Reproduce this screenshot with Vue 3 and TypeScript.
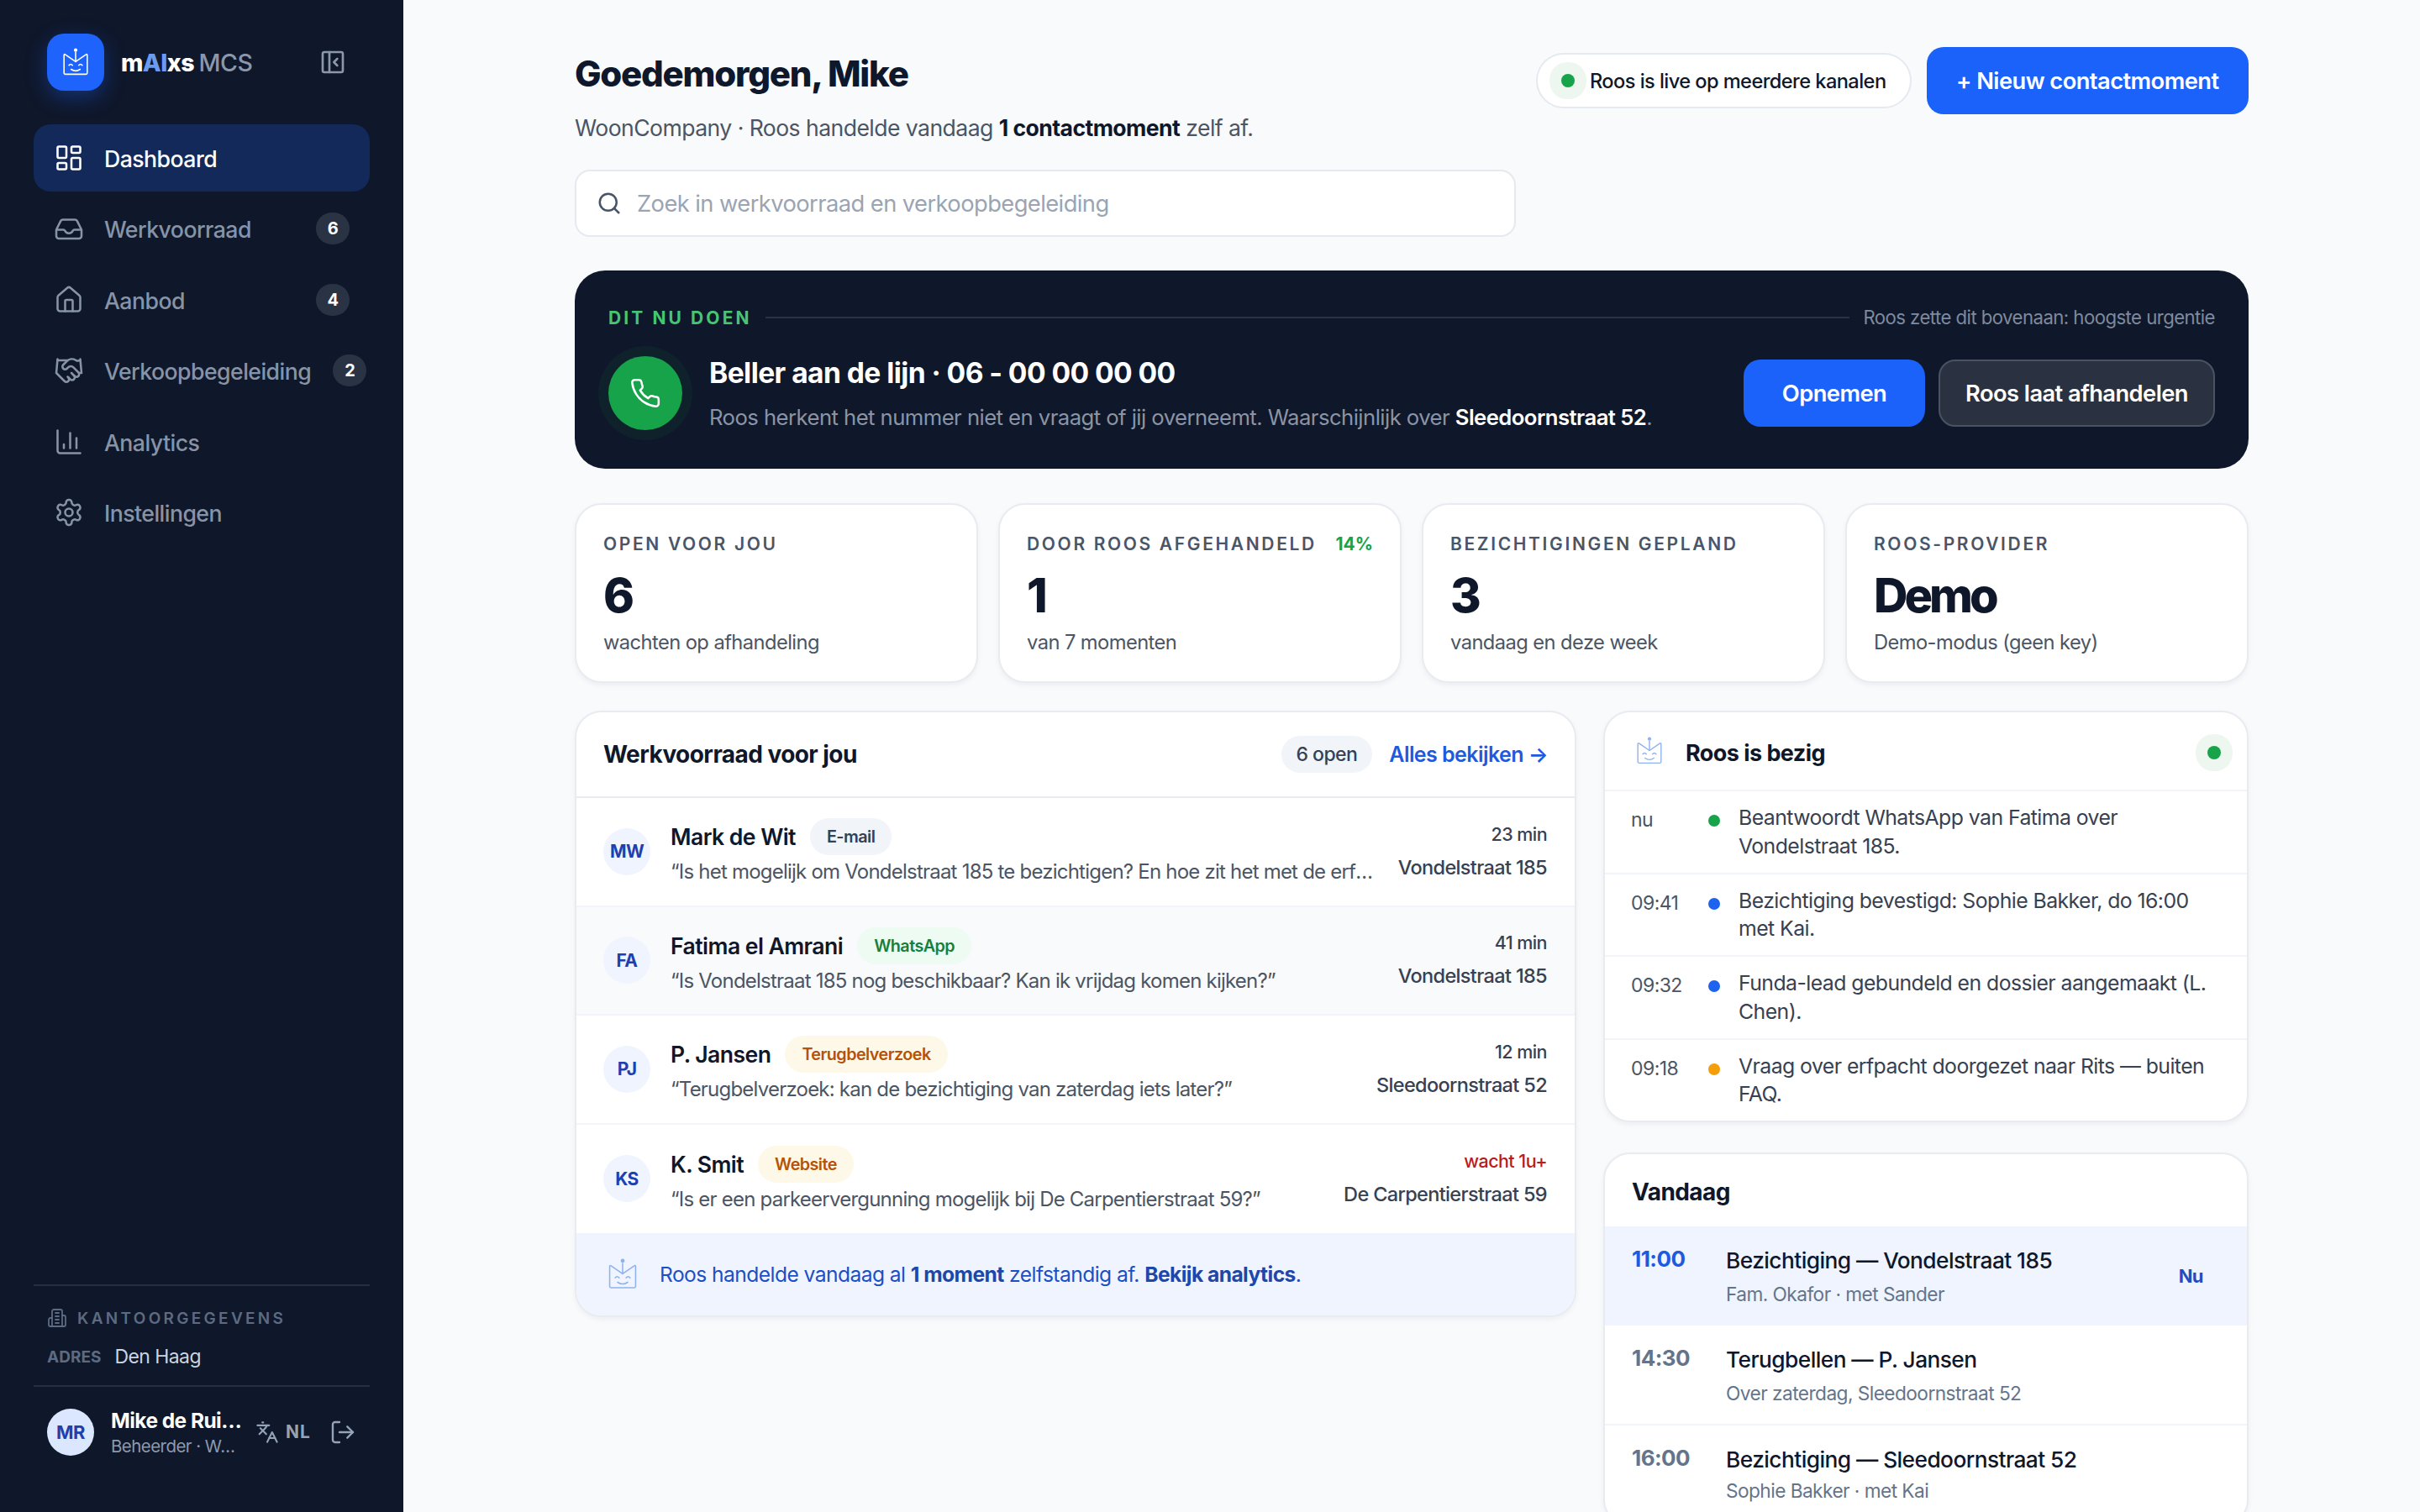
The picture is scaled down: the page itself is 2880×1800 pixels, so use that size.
<script setup lang="ts">
const nav = [
  { label: "Dashboard", icon: "dash", active: true },
  { label: "Werkvoorraad", icon: "inbox", badge: 6 },
  { label: "Aanbod", icon: "home", badge: 4 },
  { label: "Verkoopbegeleiding", icon: "hands", badge: 2 },
  { label: "Analytics", icon: "chart" },
  { label: "Instellingen", icon: "gear" },
];
const stats = [
  { label: "OPEN VOOR JOU", value: "6", sub: "wachten op afhandeling" },
  { label: "DOOR ROOS AFGEHANDELD", pct: "14%", value: "1", sub: "van 7 momenten" },
  { label: "BEZICHTIGINGEN GEPLAND", value: "3", sub: "vandaag en deze week" },
  { label: "ROOS-PROVIDER", value: "Demo", sub: "Demo-modus (geen key)" },
];
const work = [
  { ini: "MW", name: "Mark de Wit", tag: "E-mail", kind: "grey", quote: "“Is het mogelijk om Vondelstraat 185 te bezichtigen? En hoe zit het met de erfpacht en de servicekosten?”", time: "23 min", addr: "Vondelstraat 185" },
  { ini: "FA", name: "Fatima el Amrani", tag: "WhatsApp", kind: "green", quote: "“Is Vondelstraat 185 nog beschikbaar? Kan ik vrijdag komen kijken?”", time: "41 min", addr: "Vondelstraat 185", alt: true },
  { ini: "PJ", name: "P. Jansen", tag: "Terugbelverzoek", kind: "amber", quote: "“Terugbelverzoek: kan de bezichtiging van zaterdag iets later?”", time: "12 min", addr: "Sleedoornstraat 52" },
  { ini: "KS", name: "K. Smit", tag: "Website", kind: "amber", quote: "“Is er een parkeervergunning mogelijk bij De Carpentierstraat 59?”", time: "wacht 1u+", late: true, addr: "De Carpentierstraat 59" },
];
const activity = [
  { time: "nu", color: "#16a34a", text: "Beantwoordt WhatsApp van Fatima over Vondelstraat 185." },
  { time: "09:41", color: "#1d63f0", text: "Bezichtiging bevestigd: Sophie Bakker, do 16:00 met Kai." },
  { time: "09:32", color: "#1d63f0", text: "Funda-lead gebundeld en dossier aangemaakt (L. Chen)." },
  { time: "09:18", color: "#f59e0b", text: "Vraag over erfpacht doorgezet naar Rits — buiten FAQ." },
];
const today = [
  { time: "11:00", title: "Bezichtiging — Vondelstraat 185", sub: "Fam. Okafor · met Sander", now: true },
  { time: "14:30", title: "Terugbellen — P. Jansen", sub: "Over zaterdag, Sleedoornstraat 52" },
  { time: "16:00", title: "Bezichtiging — Sleedoornstraat 52", sub: "Sophie Bakker · met Kai" },
];
// Roos mascot, shared by the logo and the two small marks
const roosFrame = "M3 8v20a1.5 1.5 0 0 0 1.5 1.5h23a1.5 1.5 0 0 0 1.5-1.5V8a.8.8 0 0 0-1.3-.6L16 15.5 4.3 7.400a.8.8 0 0 0-1.3.6z";
const roosFace = "M16 5v10.500M8.500 19.500q2-2.400 4 0M19.500 19.500q2-2.400 4 0M11 24q5 3.500 10 0";
</script>

<template>
  <div class="app">
    <aside class="side">
      <div class="brand">
        <div class="logo">
          <svg viewBox="0 0 32 32" width="34" height="34" fill="none" stroke="#fff" stroke-width="1.5" stroke-linecap="round" stroke-linejoin="round">
            <path :d="roosFrame" /><path :d="roosFace" />
            <circle cx="16" cy="2.500" r="2" fill="#fff" stroke="none" />
          </svg>
        </div>
        <div class="brand-name">m<span class="ai">AI</span>xs <span class="mcs">MCS</span></div>
        <svg class="collapse" viewBox="0 0 24 24" width="32" height="32" fill="none" stroke="#8b97aa" stroke-width="2" stroke-linecap="round" stroke-linejoin="round">
          <rect x="3" y="3" width="18" height="18" rx="1.5" /><path d="M9 3v18" /><path d="m16 15-3-3 3-3" />
        </svg>
      </div>

      <nav class="nav">
        <div v-for="item in nav" :key="item.label" class="nav-item" :class="{ active: item.active }">
          <svg viewBox="0 0 24 24" width="36" height="36" fill="none" stroke="currentColor" stroke-width="1.7" stroke-linecap="round" stroke-linejoin="round">
            <template v-if="item.icon === 'dash'">
              <rect x="3" y="3" width="7" height="9" rx="1" /><rect x="14" y="3" width="7" height="5" rx="1" /><rect x="14" y="12" width="7" height="9" rx="1" /><rect x="3" y="16" width="7" height="5" rx="1" />
            </template>
            <template v-else-if="item.icon === 'inbox'">
              <path d="M5.45 6.11 2 13v5a2 2 0 0 0 2 2h16a2 2 0 0 0 2-2v-5l-3.45-6.89A2 2 0 0 0 16.76 5H7.24a2 2 0 0 0-1.79 1.11z" />
              <path d="M2.5 13h5.2c.5 0 .9.3 1.1.7a3.5 3.5 0 0 0 6.4 0c.2-.4.6-.7 1.1-.7h5.2" />
            </template>
            <template v-else-if="item.icon === 'home'">
              <path d="M15 21v-8a1 1 0 0 0-1-1h-4a1 1 0 0 0-1 1v8" />
              <path d="M3 10a2 2 0 0 1 .709-1.528l7-5.999a2 2 0 0 1 2.582 0l7 5.999A2 2 0 0 1 21 10v9a2 2 0 0 1-2 2H5a2 2 0 0 1-2-2z" />
            </template>
            <template v-else-if="item.icon === 'hands'">
              <path d="m11 17 2 2a1 1 0 1 0 3-3" />
              <path d="m14 14 2.5 2.5a1 1 0 1 0 3-3l-3.88-3.88a3 3 0 0 0-4.24 0l-.88.88a1 1 0 1 1-3-3l2.81-2.81a5.79 5.79 0 0 1 7.06-.87l.47.28a2 2 0 0 0 1.42.25L21 4" />
              <path d="m21 3 1 11h-2" /><path d="M3 3 2 14l6.5 6.5a1 1 0 1 0 3-3" /><path d="M3 4h8" />
            </template>
            <template v-else-if="item.icon === 'chart'">
              <path d="M3 3v16a2 2 0 0 0 2 2h16" /><path d="M18 17V9" /><path d="M13 17V5" /><path d="M8 17v-3" />
            </template>
            <template v-else>
              <path d="M12.22 2h-.44a2 2 0 0 0-2 2v.18a2 2 0 0 1-1 1.73l-.43.25a2 2 0 0 1-2 0l-.15-.08a2 2 0 0 0-2.73.73l-.22.38a2 2 0 0 0 .73 2.73l.15.1a2 2 0 0 1 1 1.72v.51a2 2 0 0 1-1 1.74l-.15.09a2 2 0 0 0-.73 2.73l.22.38a2 2 0 0 0 2.73.73l.15-.08a2 2 0 0 1 2 0l.43.25a2 2 0 0 1 1 1.73V20a2 2 0 0 0 2 2h.44a2 2 0 0 0 2-2v-.18a2 2 0 0 1 1-1.73l.43-.25a2 2 0 0 1 2 0l.15.08a2 2 0 0 0 2.73-.73l.22-.39a2 2 0 0 0-.73-2.73l-.15-.08a2 2 0 0 1-1-1.74v-.5a2 2 0 0 1 1-1.74l.15-.09a2 2 0 0 0 .73-2.73l-.22-.38a2 2 0 0 0-2.73-.73l-.15.08a2 2 0 0 1-2 0l-.43-.25a2 2 0 0 1-1-1.73V4a2 2 0 0 0-2-2z" />
              <circle cx="12" cy="12" r="3" />
            </template>
          </svg>
          <span class="nav-label">{{ item.label }}</span>
          <span v-if="item.badge" class="nav-badge">{{ item.badge }}</span>
        </div>
      </nav>

      <div class="office">
        <div class="office-head">
          <svg viewBox="0 0 24 24" width="24" height="24" fill="none" stroke="#5c6b82" stroke-width="1.8" stroke-linecap="round" stroke-linejoin="round">
            <path d="M6 22V4a2 2 0 0 1 2-2h8a2 2 0 0 1 2 2v18Z" /><path d="M6 12H4a2 2 0 0 0-2 2v6a2 2 0 0 0 2 2h2" /><path d="M18 9h2a2 2 0 0 1 2 2v9a2 2 0 0 1-2 2h-2" /><path d="M10 6h4M10 10h4M10 14h4M10 18h4" />
          </svg>
          <span>KANTOORGEGEVENS</span>
        </div>
        <div class="office-line"><span class="office-key">ADRES</span><span class="office-val">Den Haag</span></div>
      </div>

      <div class="user">
        <div class="user-av">MR</div>
        <div class="user-text">
          <div class="user-name">Mike de Ruiter</div>
          <div class="user-role">Beheerder · WoonCompany</div>
        </div>
        <svg viewBox="0 0 24 24" width="28" height="28" fill="none" stroke="#94a3b8" stroke-width="1.8" stroke-linecap="round" stroke-linejoin="round">
          <path d="m5 8 6 6" /><path d="m4 14 6-6 2-3" /><path d="M2 5h12" /><path d="M7 2h1" /><path d="m22 22-5-10-5 10" /><path d="M14 18h6" />
        </svg>
        <span class="lang">NL</span>
        <svg class="logout" viewBox="0 0 24 24" width="32" height="32" fill="none" stroke="#94a3b8" stroke-width="1.8" stroke-linecap="round" stroke-linejoin="round">
          <path d="m16 17 5-5-5-5" /><path d="M21 12H9" /><path d="M9 21H5a2 2 0 0 1-2-2V5a2 2 0 0 1 2-2h4" />
        </svg>
      </div>
    </aside>

    <main class="main">
      <header class="head">
        <div>
          <h1>Goedemorgen, Mike</h1>
          <p class="lead">WoonCompany · Roos handelde vandaag <b>1 contactmoment</b> zelf af.</p>
        </div>
        <div class="head-actions">
          <div class="live"><i class="dot" /><span>Roos is live op meerdere kanalen</span></div>
          <button class="btn primary">+ Nieuw contactmoment</button>
        </div>
      </header>

      <div class="search">
        <svg viewBox="0 0 24 24" width="30" height="30" fill="none" stroke="#475569" stroke-width="2" stroke-linecap="round" stroke-linejoin="round">
          <circle cx="11" cy="11" r="8" /><path d="m21 21-4.3-4.3" />
        </svg>
        <span>Zoek in werkvoorraad en verkoopbegeleiding</span>
      </div>

      <section class="task">
        <div class="task-top">
          <span class="task-kicker">DIT NU DOEN</span>
          <span class="task-rule" />
          <span class="task-why">Roos zette dit bovenaan: hoogste urgentie</span>
        </div>
        <div class="task-body">
          <div class="task-phone">
            <svg viewBox="0 0 24 24" width="38" height="38" fill="none" stroke="#fff" stroke-width="1.6" stroke-linecap="round" stroke-linejoin="round">
              <path d="M22 16.92v3a2 2 0 0 1-2.18 2 19.79 19.79 0 0 1-8.63-3.07 19.5 19.5 0 0 1-6-6 19.79 19.79 0 0 1-3.07-8.67A2 2 0 0 1 4.11 2h3a2 2 0 0 1 2 1.72 12.84 12.84 0 0 0 .7 2.81 2 2 0 0 1-.45 2.11L8.09 9.91a16 16 0 0 0 6 6l1.27-1.27a2 2 0 0 1 2.11-.45 12.84 12.84 0 0 0 2.81.7A2 2 0 0 1 22 16.92z" />
            </svg>
          </div>
          <div class="task-text">
            <div class="task-title">Beller aan de lijn · 06 - 00 00 00 00</div>
            <div class="task-sub">Roos herkent het nummer niet en vraagt of jij overneemt. Waarschijnlijk over <b>Sleedoornstraat 52</b>.</div>
          </div>
          <button class="btn primary open">Opnemen</button>
          <button class="btn ghost">Roos laat afhandelen</button>
        </div>
      </section>

      <section class="stats">
        <div v-for="s in stats" :key="s.label" class="card stat">
          <div class="stat-label"><span>{{ s.label }}</span><span v-if="s.pct" class="stat-pct">{{ s.pct }}</span></div>
          <div class="stat-value">{{ s.value }}</div>
          <div class="stat-sub">{{ s.sub }}</div>
        </div>
      </section>

      <section class="cols">
        <div class="card work">
          <div class="work-head">
            <h2>Werkvoorraad voor jou</h2>
            <span class="open-pill">6 open</span>
            <span class="all-link">Alles bekijken →</span>
          </div>
          <div v-for="w in work" :key="w.ini" class="work-row" :class="{ alt: w.alt }">
            <div class="av">{{ w.ini }}</div>
            <div class="work-main">
              <div class="work-name"><b>{{ w.name }}</b><span class="tag" :class="w.kind">{{ w.tag }}</span></div>
              <div class="work-quote">{{ w.quote }}</div>
            </div>
            <div class="work-meta">
              <div class="work-time" :class="{ late: w.late }">{{ w.time }}</div>
              <div class="work-addr">{{ w.addr }}</div>
            </div>
          </div>
          <div class="work-foot">
            <svg viewBox="0 0 32 32" width="38" height="38" fill="none" stroke="#8fb2ee" stroke-width="1.3" stroke-linecap="round" stroke-linejoin="round">
              <path :d="roosFrame" /><path :d="roosFace" />
              <circle cx="16" cy="2.500" r="2" fill="#8fb2ee" stroke="none" />
            </svg>
            <span>Roos handelde vandaag al <b>1 moment</b> zelfstandig af. <b>Bekijk analytics</b>.</span>
          </div>
        </div>

        <div class="right">
          <div class="card busy">
            <div class="busy-head">
              <svg viewBox="0 0 32 32" width="34" height="34" fill="none" stroke="#8fb2ee" stroke-width="1.3" stroke-linecap="round" stroke-linejoin="round">
                <path :d="roosFrame" /><path :d="roosFace" />
                <circle cx="16" cy="2.500" r="2" fill="#8fb2ee" stroke="none" />
              </svg>
              <h2>Roos is bezig</h2>
              <i class="dot" />
            </div>
            <div v-for="a in activity" :key="a.time" class="busy-row">
              <span class="busy-time">{{ a.time }}</span>
              <i class="busy-dot" :style="{ background: a.color }" />
              <span class="busy-text">{{ a.text }}</span>
            </div>
          </div>

          <div class="card agenda">
            <h2>Vandaag</h2>
            <div v-for="t in today" :key="t.time" class="agenda-row" :class="{ current: t.now }">
              <span class="agenda-time">{{ t.time }}</span>
              <div class="agenda-main">
                <div class="agenda-title">{{ t.title }}</div>
                <div class="agenda-sub">{{ t.sub }}</div>
              </div>
              <span v-if="t.now" class="agenda-now">Nu</span>
            </div>
          </div>
        </div>
      </section>
    </main>
  </div>
</template>

<style>
html, body { margin: 0; overflow: hidden; }
</style>

<style scoped>
.app {
  display: flex;
  height: 1800px;
  overflow: hidden;
  background: #f8fafc;
  font-family: Inter, "Liberation Sans", sans-serif;
  letter-spacing: -0.035em;
  color: #0f172a;
}
h1, h2, p { margin: 0; }
button { font-family: inherit; border: 0; letter-spacing: inherit; }

.side {
  width: 480px;
  flex: none;
  box-sizing: border-box;
  display: flex;
  flex-direction: column;
  padding: 40px 40px 0;
  background: #0f172a;
}
.brand { display: flex; align-items: center; height: 68px; padding-left: 16px; }
.logo {
  width: 68px;
  height: 68px;
  flex: none;
  display: flex;
  align-items: center;
  justify-content: center;
  border-radius: 20px;
  background: #1e63fb;
  box-shadow: 0 8px 24px rgba(30, 99, 251, 0.35);
}
.brand-name { margin-left: 20px; font-size: 28.5px; font-weight: 800; color: #fff; white-space: nowrap; letter-spacing: -0.02em; }
.ai { color: #6a9bf0; }
.mcs { color: #8b97aa; font-weight: 500; }
.collapse { margin-left: auto; margin-right: 28px; }

.nav { display: flex; flex-direction: column; gap: 4.4px; margin-top: 40px; }
.nav-item {
  display: flex;
  align-items: center;
  gap: 24px;
  height: 80px;
  padding: 0 24px;
  border-radius: 20px;
  color: #8793a7;
  font-size: 26.7px;
  font-weight: 500;
  white-space: nowrap;
}
.nav-item svg { flex: none; }
.nav-item.active { background: #12295a; color: #fff; }
.nav-label { flex: none; padding-top: 2px; margin-right: 2px; }
.nav-badge {
  margin-left: auto;
  width: 40px;
  height: 38px;
  flex: none;
  display: flex;
  align-items: center;
  justify-content: center;
  border-radius: 20px;
  background: #2a3344;
  color: #fff;
  font-size: 20px;
  font-weight: 700;
}

.office { margin-top: auto; height: 120px; box-sizing: border-box; padding: 26px 16px 0; border-top: 2px solid #252f42; }
.office-head { display: flex; align-items: center; gap: 12px; height: 24px; font-size: 19px; font-weight: 600; color: #5c6b82; letter-spacing: 3.3px; }
.office-line { display: flex; align-items: center; gap: 16px; height: 24px; margin-top: 22px; }
.office-key { font-size: 19px; font-weight: 700; color: #5c6b82; letter-spacing: 0; }
.office-val { font-size: 23px; color: #cbd5e1; }

.user {
  display: flex;
  align-items: center;
  height: 107px;
  margin-bottom: 42px;
  padding: 0 16px;
  border-top: 2px solid #252f42;
}
.user-av {
  width: 56px;
  height: 56px;
  flex: none;
  display: flex;
  align-items: center;
  justify-content: center;
  border-radius: 50%;
  background: #dbe7fe;
  color: #1e40af;
  font-size: 22px;
  font-weight: 700;
}
.user-text { width: 156px; flex: none; margin: 0 16px 0 20px; }
.user-name, .user-role { white-space: nowrap; overflow: hidden; text-overflow: ellipsis; }
.user-name { font-size: 24.5px; font-weight: 700; color: #fff; line-height: 34px; }
.user-role { font-size: 20.5px; color: #8d99ad; line-height: 28px; }
.lang { margin-left: 8px; font-size: 21px; font-weight: 700; color: #94a3b8; letter-spacing: 1px; }
.logout { margin-left: auto; }

.main { flex: 1; min-width: 0; box-sizing: border-box; padding: 56px 204px 0; }
.head { display: flex; justify-content: space-between; align-items: flex-start; }
h1 { font-size: 42px; line-height: 64px; font-weight: 800; letter-spacing: -1.25px; }
.lead { margin-top: 14px; font-size: 26.6px; line-height: 36px; color: #4b5563; }
.lead b { color: #0f172a; font-weight: 700; }
.head-actions { display: flex; align-items: center; gap: 18px; }
.live {
  display: flex;
  align-items: center;
  gap: 4px;
  height: 66px;
  box-sizing: border-box;
  padding: 0 28px 0 14px;
  background: #fff;
  border: 2px solid #e5e9f0;
  border-radius: 33px;
  font-size: 23.6px;
  font-weight: 500;
  white-space: nowrap;
}
.dot {
  display: block;
  width: 16px;
  height: 16px;
  margin: 14px;
  flex: none;
  border-radius: 50%;
  background: #16a34a;
  box-shadow: 0 0 0 14px #eef6f0;
}
.btn { height: 80px; border-radius: 20px; font-size: 27.3px; font-weight: 600; color: #fff; white-space: nowrap; flex: none; }
.primary { background: #1b62fb; padding: 0 35.5px; }
.open { width: 216px; padding: 0; }
.ghost { width: 329px; margin-left: 16px; background: #2a3140; border: 2px solid #4b5363; }

.search {
  display: flex;
  align-items: center;
  gap: 18px;
  width: 1120px;
  height: 80px;
  margin-top: 32px;
  box-sizing: border-box;
  padding: 0 24px;
  background: #fff;
  border: 2px solid #e5e9f0;
  border-radius: 18px;
  font-size: 27.3px;
  color: #9aa4b3;
}

.task { margin-top: 40px; height: 236px; box-sizing: border-box; padding: 40px; background: #0f172a; border-radius: 36px; }
.task-top { display: flex; align-items: center; height: 32px; }
.task-kicker { font-size: 21px; font-weight: 700; color: #46c672; letter-spacing: 3.1px; }
.task-rule { flex: 1; height: 2px; margin: 0 16px; background: #2a3344; }
.task-why { font-size: 22.2px; color: #7e8a9d; margin-top: -2px; }
.task-body { display: flex; align-items: center; margin-top: 28px; }
.task-phone {
  width: 88px;
  height: 88px;
  flex: none;
  display: flex;
  align-items: center;
  justify-content: center;
  border-radius: 50%;
  background: #16a34a;
  box-shadow: 0 0 0 12px rgba(22, 163, 74, 0.08);
}
.task-text { flex: 1; min-width: 0; margin-left: 32px; }
.task-title { font-size: 33.6px; line-height: 44px; font-weight: 700; color: #fff; }
.task-sub { margin-top: 14px; font-size: 25.7px; line-height: 34px; color: #8a94a6; white-space: nowrap; }
.task-sub b { color: #fff; font-weight: 600; }

.stats { display: grid; grid-template-columns: repeat(4, 1fr); gap: 24px; margin-top: 41px; }
.card { background: #fff; border: 2px solid #e8ecf1; border-radius: 32px; box-shadow: 0 3px 6px rgba(15, 23, 42, 0.05); box-sizing: border-box; }
.stat { height: 214px; padding: 32px 32px 0; }
.stat-label { display: flex; justify-content: space-between; font-size: 21px; line-height: 30px; font-weight: 600; color: #4a5568; letter-spacing: 2.65px; white-space: nowrap; }
.stat-pct { color: #16a34a; font-weight: 700; letter-spacing: 0; }
.stat-value { margin-top: 12px; font-size: 56px; line-height: 68px; font-weight: 800; color: #0f172a; letter-spacing: -4px; }
.stat-sub { margin-top: 5px; font-size: 23.7px; line-height: 34px; color: #4b5563; }

.cols { display: grid; grid-template-columns: 1fr 768px; gap: 32px; margin-top: 33px; align-items: start; }
.work { overflow: hidden; }
.work-head { display: flex; align-items: center; height: 102px; box-sizing: border-box; padding: 0 32px; border-bottom: 2px solid #e8ecf1; }
h2 { font-size: 28px; font-weight: 700; }
.open-pill { margin-left: auto; padding: 0 18px; height: 44px; line-height: 44px; border-radius: 22px; background: #f1f4f8; font-size: 23px; font-weight: 500; color: #334155; }
.all-link { margin-left: 20px; font-size: 25px; font-weight: 600; color: #1d5ae0; }
.work-row { display: flex; align-items: center; gap: 24px; height: 129.5px; box-sizing: border-box; padding: 0 33px 0 32px; border-bottom: 2px solid #f1f4f8; }
.work-row.alt { background: #f8fafc; }
.work-row:nth-of-type(5) { border-bottom: 0; }
.av {
  width: 56px;
  height: 56px;
  flex: none;
  display: flex;
  align-items: center;
  justify-content: center;
  border-radius: 50%;
  background: #eff4fe;
  color: #1e40af;
  font-size: 21px;
  font-weight: 700;
}
.work-main { flex: 1; min-width: 0; margin-top: 3px; }
.work-name { display: flex; align-items: center; gap: 17px; height: 44px; white-space: nowrap; }
.work-name b { font-size: 26.6px; font-weight: 600; }
.tag { height: 44px; line-height: 44px; padding: 0 20px; border-radius: 22px; font-size: 19.8px; font-weight: 600; }
.tag.grey { background: #f1f4f8; color: #334155; }
.tag.green { background: #eefbf2; color: #15803d; }
.tag.amber { background: #fef8e8; color: #b45309; }
.work-quote { margin-top: 2px; font-size: 24px; letter-spacing: -0.78px; line-height: 36px; color: #4b5563; white-space: nowrap; overflow: hidden; text-overflow: ellipsis; }
.work-meta { flex: none; text-align: right; margin-top: -2px; }
.work-time { font-size: 21.5px; line-height: 32px; font-weight: 500; color: #374151; }
.work-time.late { color: #b91c1c; }
.work-addr { margin-top: 8px; font-size: 23.5px; letter-spacing: -0.65px; line-height: 32px; font-weight: 500; color: #374151; white-space: nowrap; }
.work-foot { display: flex; align-items: center; gap: 25px; height: 98px; padding: 0 32px 0 36px; background: #eff4fe; font-size: 24.6px; color: #1d4fc4; }
.work-foot b { font-weight: 700; color: #1e47ab; }

.right { display: flex; flex-direction: column; gap: 36px; }
.busy-head { display: flex; align-items: center; gap: 26px; height: 92px; box-sizing: content-box; padding: 0 0 0 36px; border-bottom: 2px solid #f1f4f8; }
.busy-head h2 { padding-top: 4px; font-size: 27px; }
.busy-head .dot { margin-left: auto; margin-right: 31px; margin-top: 18px; }
.busy-row { display: grid; grid-template-columns: 86px 14px 1fr; align-items: start; height: 98.5px; box-sizing: border-box; padding: 15px 30px 0 31px; border-bottom: 2px solid #f1f4f8; }
.busy-row:last-child { border-bottom: 0; height: 96px; }
.busy-time { font-size: 23px; line-height: 32px; color: #4b5563; margin-top: 3px; }
.busy-dot { width: 14px; height: 14px; border-radius: 50%; margin-top: 13px; margin-left: 6px; }
.busy-text { margin-left: 28px; font-size: 24.8px; line-height: 33.5px; color: #374151; }

.agenda { overflow: hidden; }
.agenda h2 { height: 86px; line-height: 90px; padding-left: 32px; }
.agenda-row { display: flex; align-items: flex-start; height: 118.5px; box-sizing: border-box; padding: 21px 52px 0 32px; border-bottom: 2px solid #f1f4f8; }
.agenda-row.current { background: #eff4fe; border-bottom: 0; }
.agenda-row:last-child .agenda-sub { line-height: 34px; }
.agenda-time { width: 112px; flex: none; font-size: 26px; line-height: 36px; font-weight: 700; color: #64748b; }
.current .agenda-time { color: #1d5ae0; }
.agenda-main { flex: 1; }
.agenda-title { font-size: 26.3px; line-height: 40px; font-weight: 500; }
.agenda-sub { font-size: 22.7px; line-height: 40px; color: #64748b; }
.agenda-now { align-self: center; margin-top: -20px; font-size: 22px; font-weight: 700; color: #1e4fc0; }
</style>
